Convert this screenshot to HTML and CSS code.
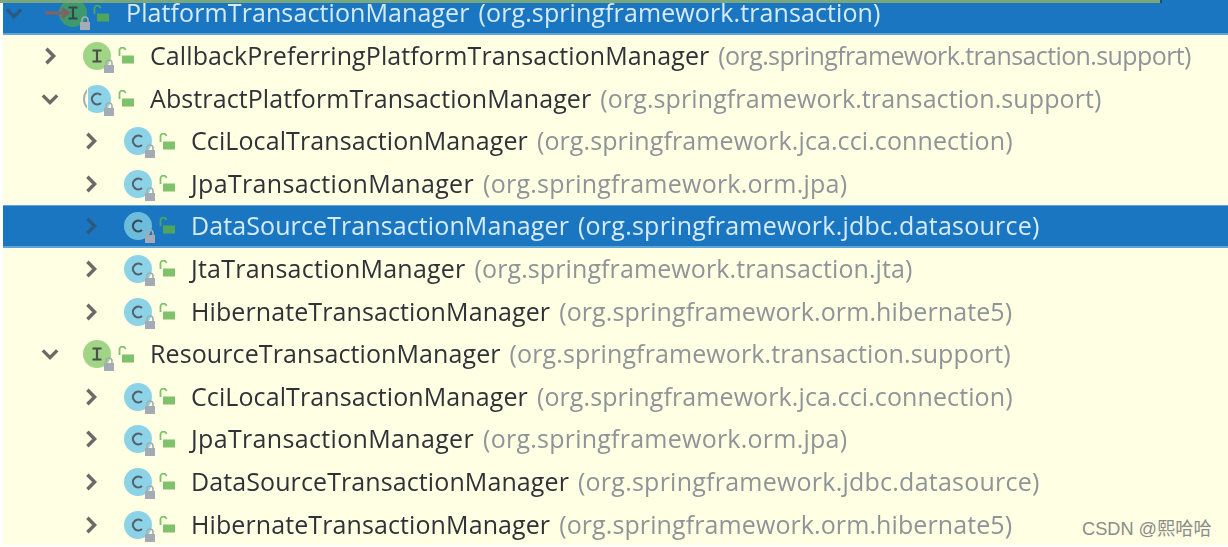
FILE: index.html
```html
<!DOCTYPE html>
<html lang="en">
<head>
<meta charset="utf-8">
<title>Type hierarchy</title>
<link rel="stylesheet" href="styles.css">
</head>
<body>
<svg class="defs" width="0" height="0" aria-hidden="true">
  <defs>
    <clipPath id="abs-clip"><rect x="5" y="0" width="23" height="28"/></clipPath>
    <clipPath id="abs-left"><rect x="0" y="0" width="4" height="28"/></clipPath>
    <g id="lock">
      <rect x="1" y="6" width="10" height="8" fill="#a3abb4"/>
      <path d="M3 6.5V4a3 3 0 0 1 6 0v2.5" fill="none" stroke="#a3abb4" stroke-width="1.6"/>
    </g>
    <g id="open">
      <rect x="4" y="8.5" width="12" height="8" fill="#7fc26b"/>
      <path d="M1.5 9V4a3 3 0 0 1 6-.8" fill="none" stroke="#7fc26b" stroke-width="1.8"/>
    </g>
    <g id="open-sel">
      <rect x="4" y="8.5" width="12" height="8" fill="#4fa55a"/>
      <path d="M1.5 9V4a3 3 0 0 1 6-.8" fill="none" stroke="#4fa55a" stroke-width="1.8"/>
    </g>
    <g id="badge-c">
      <circle cx="14" cy="14" r="14" fill="#8dd3e8"/>
      <path d="M18 10a5.4 5.4 0 1 0 0 8" fill="none" stroke="#55616c" stroke-width="2.2"/>
      <use href="#lock" x="20" y="17"/>
    </g>
    <g id="badge-abs">
      <circle cx="14" cy="14" r="14" fill="#8dd3e8" clip-path="url(#abs-clip)"/>
      <circle cx="14" cy="14" r="13" fill="none" stroke="#a9adb0" stroke-width="2" clip-path="url(#abs-left)"/>
      <path d="M18 10a5.4 5.4 0 1 0 0 8" fill="none" stroke="#55616c" stroke-width="2.2"/>
      <use href="#lock" x="20" y="17"/>
    </g>
    <g id="badge-c-sel">
      <circle cx="14" cy="14" r="14" fill="#6cbcdc"/>
      <path d="M18 10a5.4 5.4 0 1 0 0 8" fill="none" stroke="#3a4a58" stroke-width="2.2"/>
      <use href="#lock" x="20" y="17"/>
    </g>
    <g id="badge-i">
      <circle cx="14" cy="14" r="14" fill="#a1d586"/>
      <path d="M9.5 8.5h9M9.5 19.5h9M14 8.5v11" fill="none" stroke="#4b4f4a" stroke-width="2.2"/>
      <use href="#lock" x="20" y="17"/>
    </g>
    <g id="badge-i-sel">
      <circle cx="14" cy="14" r="14" fill="#3d9a6c"/>
      <path d="M9.5 8.5h9M9.5 19.5h9M14 8.5v11" fill="none" stroke="#35474a" stroke-width="2.2"/>
      <use href="#lock" x="20" y="17"/>
    </g>
  </defs>
</svg>
<div class="topline"></div>
<main class="tree">
  <div class="row root selected">
    <svg class="arrow" viewBox="0 0 20 20"><path d="M2 6l8 8 8-8"/></svg>
    <svg class="icon" viewBox="0 -3 34 34"><use href="#badge-i-sel"/></svg>
    <svg class="vis" viewBox="0 0 17 17"><use href="#open-sel"/></svg>
    <span class="name">PlatformTransactionManager</span><span class="pkg">(org.springframework.transaction)</span>
    <svg class="mark" viewBox="0 0 34 14"><path d="M0 7h30M22 1l8 6-8 6"/></svg>
  </div>
  <div class="row l1">
    <svg class="arrow" viewBox="0 0 20 20"><path d="M6 2l8 8-8 8"/></svg>
    <svg class="icon" viewBox="0 -3 34 34"><use href="#badge-i"/></svg>
    <svg class="vis" viewBox="0 0 17 17"><use href="#open"/></svg>
    <span class="name">CallbackPreferringPlatformTransactionManager</span><span class="pkg tight">(org.springframework.transaction.support)</span>
  </div>
  <div class="row l1">
    <svg class="arrow" viewBox="0 0 20 20"><path d="M2 6l8 8 8-8"/></svg>
    <svg class="icon" viewBox="0 -3 34 34"><use href="#badge-abs"/></svg>
    <svg class="vis" viewBox="0 0 17 17"><use href="#open"/></svg>
    <span class="name">AbstractPlatformTransactionManager</span><span class="pkg">(org.springframework.transaction.support)</span>
  </div>
  <div class="row l2">
    <svg class="arrow" viewBox="0 0 20 20"><path d="M6 2l8 8-8 8"/></svg>
    <svg class="icon" viewBox="0 -3 34 34"><use href="#badge-c"/></svg>
    <svg class="vis" viewBox="0 0 17 17"><use href="#open"/></svg>
    <span class="name">CciLocalTransactionManager</span><span class="pkg">(org.springframework.jca.cci.connection)</span>
  </div>
  <div class="row l2">
    <svg class="arrow" viewBox="0 0 20 20"><path d="M6 2l8 8-8 8"/></svg>
    <svg class="icon" viewBox="0 -3 34 34"><use href="#badge-c"/></svg>
    <svg class="vis" viewBox="0 0 17 17"><use href="#open"/></svg>
    <span class="name wide">JpaTransactionManager</span><span class="pkg loose">(org.springframework.orm.jpa)</span>
  </div>
  <div class="row l2 selected">
    <svg class="arrow" viewBox="0 0 20 20"><path d="M6 2l8 8-8 8"/></svg>
    <svg class="icon" viewBox="0 -3 34 34"><use href="#badge-c-sel"/></svg>
    <svg class="vis" viewBox="0 0 17 17"><use href="#open-sel"/></svg>
    <span class="name">DataSourceTransactionManager</span><span class="pkg loose">(org.springframework.jdbc.datasource)</span>
  </div>
  <div class="row l2">
    <svg class="arrow" viewBox="0 0 20 20"><path d="M6 2l8 8-8 8"/></svg>
    <svg class="icon" viewBox="0 -3 34 34"><use href="#badge-c"/></svg>
    <svg class="vis" viewBox="0 0 17 17"><use href="#open"/></svg>
    <span class="name loose">JtaTransactionManager</span><span class="pkg">(org.springframework.transaction.jta)</span>
  </div>
  <div class="row l2">
    <svg class="arrow" viewBox="0 0 20 20"><path d="M6 2l8 8-8 8"/></svg>
    <svg class="icon" viewBox="0 -3 34 34"><use href="#badge-c"/></svg>
    <svg class="vis" viewBox="0 0 17 17"><use href="#open"/></svg>
    <span class="name">HibernateTransactionManager</span><span class="pkg">(org.springframework.orm.hibernate5)</span>
  </div>
  <div class="row l1">
    <svg class="arrow" viewBox="0 0 20 20"><path d="M2 6l8 8 8-8"/></svg>
    <svg class="icon" viewBox="0 -3 34 34"><use href="#badge-i"/></svg>
    <svg class="vis" viewBox="0 0 17 17"><use href="#open"/></svg>
    <span class="name">ResourceTransactionManager</span><span class="pkg">(org.springframework.transaction.support)</span>
  </div>
  <div class="row l2">
    <svg class="arrow" viewBox="0 0 20 20"><path d="M6 2l8 8-8 8"/></svg>
    <svg class="icon" viewBox="0 -3 34 34"><use href="#badge-c"/></svg>
    <svg class="vis" viewBox="0 0 17 17"><use href="#open"/></svg>
    <span class="name">CciLocalTransactionManager</span><span class="pkg">(org.springframework.jca.cci.connection)</span>
  </div>
  <div class="row l2">
    <svg class="arrow" viewBox="0 0 20 20"><path d="M6 2l8 8-8 8"/></svg>
    <svg class="icon" viewBox="0 -3 34 34"><use href="#badge-c"/></svg>
    <svg class="vis" viewBox="0 0 17 17"><use href="#open"/></svg>
    <span class="name wide">JpaTransactionManager</span><span class="pkg loose">(org.springframework.orm.jpa)</span>
  </div>
  <div class="row l2">
    <svg class="arrow" viewBox="0 0 20 20"><path d="M6 2l8 8-8 8"/></svg>
    <svg class="icon" viewBox="0 -3 34 34"><use href="#badge-c"/></svg>
    <svg class="vis" viewBox="0 0 17 17"><use href="#open"/></svg>
    <span class="name">DataSourceTransactionManager</span><span class="pkg loose">(org.springframework.jdbc.datasource)</span>
  </div>
  <div class="row l2">
    <svg class="arrow" viewBox="0 0 20 20"><path d="M6 2l8 8-8 8"/></svg>
    <svg class="icon" viewBox="0 -3 34 34"><use href="#badge-c"/></svg>
    <svg class="vis" viewBox="0 0 17 17"><use href="#open"/></svg>
    <span class="name">HibernateTransactionManager</span><span class="pkg">(org.springframework.orm.hibernate5)</span>
  </div>
</main>
<div class="watermark">CSDN @熙哈哈</div>
</body>
</html>
```
FILE: styles.css
```css
* { box-sizing: border-box; }
html, body { margin: 0; height: 547px; overflow: hidden; background: #ffffff; }
body { position: relative; font-family: "Open Sans", "Noto Sans", sans-serif; }
.defs { position: absolute; }
.topline {
  position: absolute; left: 0; top: 0; width: 1162px; height: 3px;
  background: #7ba77f; border-right: 2px solid #1c4f6e; z-index: 2;
}
.tree {
  margin-left: 3px; height: 545px; background: #ffffe4;
  display: flex; flex-direction: column;
  filter: blur(0.6px);
}
.row {
  height: 42.6px; flex: none; display: flex; align-items: center;
  position: relative; white-space: nowrap; font-size: 25px;
}
.row.selected { background: #1a76c0; border-bottom: 2px solid #5fa5d8; border-top: 1px solid #5fa5d8; }
.root { height: 34.7px; border-top: 0 !important; padding-left: 2px; padding-bottom: 6px; }
.root .arrow { margin-right: 36px; }
.root .vis { margin-left: 0; margin-right: 16px; }
.l1 { padding-left: 38px; }
.l2 { padding-left: 79px; }
.arrow { width: 18px; height: 18px; flex: none; margin-right: 24px; }
.arrow path { fill: none; stroke: #6a6a66; stroke-width: 3.8; }
.selected .arrow path { stroke: #2a5a80; }
.icon { width: 34px; height: 34px; flex: none; }
.vis { width: 17px; height: 17px; flex: none; margin-left: 1px; margin-right: 15px; }
.name, .pkg { margin-bottom: 1px; letter-spacing: 0.1px; line-height: 1; }
.name { color: #2f3338; }
.pkg { color: #8f9498; margin-left: 9px; }
.name.wide { letter-spacing: 0.34px; }
.name.loose, .pkg.loose { letter-spacing: 0.24px; }
.pkg.tight { letter-spacing: -0.6px; }
.selected .name, .selected .pkg { color: #d6ebfa; }
.mark {
  position: absolute; left: 42px; top: 6px; width: 26px; height: 14px;
}
.mark path { fill: none; stroke: #7d6462; stroke-width: 4.4; }
.watermark {
  position: absolute; left: 1082px; top: 514px; font-family: "Liberation Sans", "Noto Sans CJK SC", sans-serif;
  font-size: 18.2px; color: #8c8c88; z-index: 3;
}
```
